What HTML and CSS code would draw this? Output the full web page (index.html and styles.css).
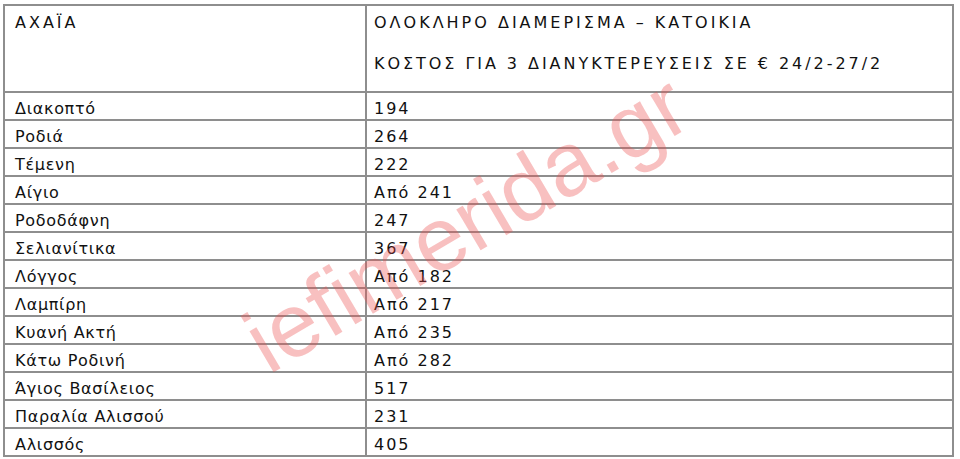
FILE: index.html
```html
<!DOCTYPE html>
<html lang="el">
<head>
<meta charset="utf-8">
<link rel="stylesheet" href="styles.css">
</head>
<body>
<div class="page">
  <table class="prices">
    <colgroup><col class="c1"><col class="c2"></colgroup>
    <tr class="head">
      <td class="h1">ΑΧΑΪΑ</td>
      <td class="h2">
        <div class="hl">ΟΛΟΚΛΗΡΟ ΔΙΑΜΕΡΙΣΜΑ – ΚΑΤΟΙΚΙΑ</div>
        <div class="hl">ΚΟΣΤΟΣ ΓΙΑ 3 ΔΙΑΝΥΚΤΕΡΕΥΣΕΙΣ ΣΕ € 24/2-27/2</div>
      </td>
    </tr>
    <tr><td>Διακοπτό</td><td>194</td></tr>
    <tr><td>Ροδιά</td><td>264</td></tr>
    <tr><td>Τέμενη</td><td>222</td></tr>
    <tr><td>Αίγιο</td><td>Από 241</td></tr>
    <tr><td>Ροδοδάφνη</td><td>247</td></tr>
    <tr><td>Σελιανίτικα</td><td>367</td></tr>
    <tr><td>Λόγγος</td><td>Από 182</td></tr>
    <tr><td>Λαμπίρη</td><td>Από 217</td></tr>
    <tr><td>Κυανή Ακτή</td><td>Από 235</td></tr>
    <tr><td>Κάτω Ροδινή</td><td>Από 282</td></tr>
    <tr><td>Άγιος Βασίλειος</td><td>517</td></tr>
    <tr><td>Παραλία Αλισσού</td><td>231</td></tr>
    <tr><td>Αλισσός</td><td>405</td></tr>
  </table>
  <div class="watermark">iefimerida.gr</div>
</div>
</body>
</html>
```
FILE: styles.css
```css
html, body {
  margin: 0;
  padding: 0;
  background: #ffffff;
}
.page {
  position: relative;
  width: 960px;
  height: 459px;
  overflow: hidden;
  padding: 4px 0 0 3px;
  box-sizing: border-box;
}
.prices {
  border-collapse: collapse;
  table-layout: fixed;
  width: 951px;
  font-family: "DejaVu Sans", sans-serif;
  font-size: 16px;
  color: #111;
}
.c1 { width: 362px; }
.prices td {
  border: 2px solid #8e8e8e;
  height: 19.7px;
  padding: 6px 10px 0 10px;
  vertical-align: middle;
  white-space: nowrap;
  line-height: 20px;
  letter-spacing: 0.7px;
}
.prices td + td {
  padding-left: 7px;
  letter-spacing: 2px;
}
.prices tr.head td {
  height: 78px;
  vertical-align: top;
  padding-top: 7px;
}
.prices tr.head td.h1 {
  letter-spacing: 3px;
}
.prices tr.head td.h2 {
  letter-spacing: 3px;
}
.hl + .hl {
  margin-top: 21px;
  letter-spacing: 2.95px;
}
.watermark {
  position: absolute;
  left: 466px;
  top: 223px;
  transform: translate(-50%, -50%) rotate(-30.5deg);
  font-family: "Liberation Sans", sans-serif;
  font-size: 90px;
  line-height: 1;
  color: rgba(235, 80, 80, 0.36);
  white-space: nowrap;
  pointer-events: none;
}
```
